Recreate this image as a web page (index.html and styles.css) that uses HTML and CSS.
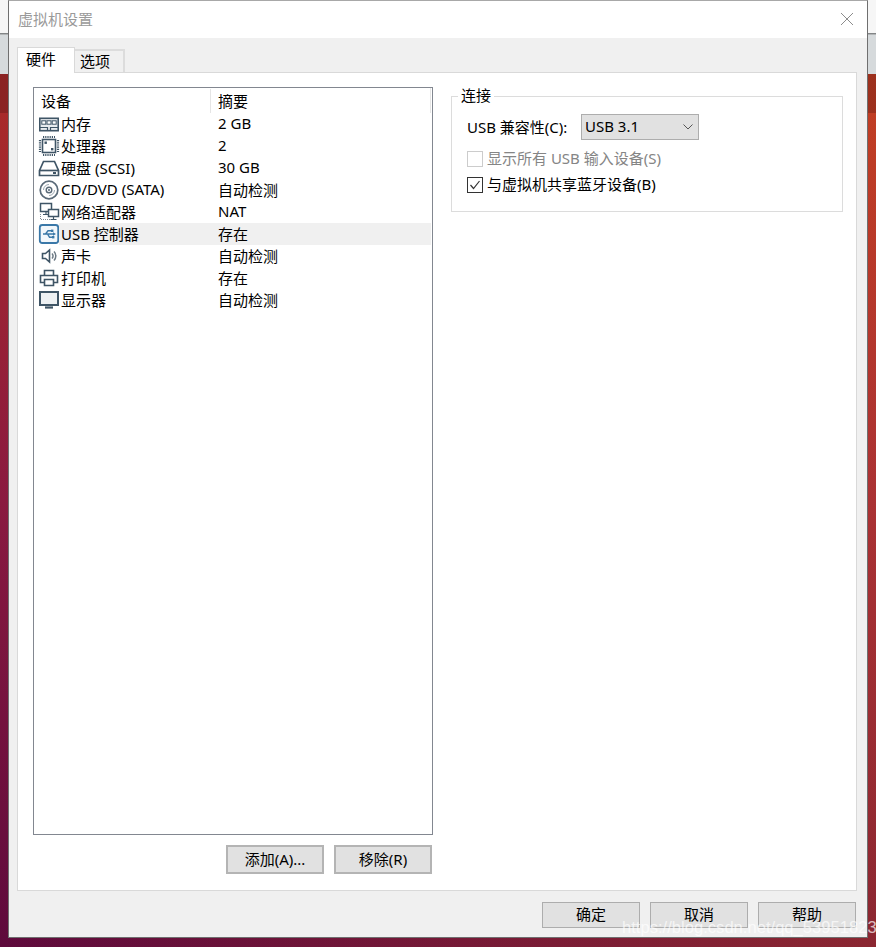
FILE: index.html
```html
<!DOCTYPE html>
<html lang="zh-CN">
  <head>
    <meta charset="UTF-8" />
    <title>虚拟机设置</title>
    <link rel="stylesheet" href="styles.css">
  </head>
  <body>
    <div class="window">
      <div class="titlebar">
        <span class="window-title">虚拟机设置</span>
        <svg class="close-icon" width="14" height="14" viewBox="0 0 14 14">
          <path d="M1 1L13 13M13 1L1 13" />
        </svg>
      </div>
      <div class="content">
        <div class="tabs">
          <div class="tab active"><span class="tab-text">硬件</span></div>
          <div class="tab"><span class="tab-text">选项</span></div>
        </div>
        <div class="panel">
          <div class="left-col">
            <div class="device-list">
              <div class="list-head">
                <div class="head-name">设备</div>
                <div class="head-summary">摘要</div>
              </div>

              <div class="device-row">
                <svg class="device-icon" width="22" height="22" viewBox="0 0 22 22">
                  <rect x="1.8" y="5.3" width="18.4" height="12.4" fill="#e8ecef" stroke-width="1.6" />
                  <rect class="light" x="3.8" y="7.8" width="4" height="3.4" />
                  <rect class="light" x="9" y="7.8" width="4" height="3.4" />
                  <rect class="light" x="14.2" y="7.8" width="4" height="3.4" />
                  <path stroke-width="1.2" d="M2 14.5H9.5V17.5M12.5 17.5V14.5H20" />
                </svg>
                <div class="device-body">
                  <div class="device-name">内存</div>
                  <div class="device-summary">2 GB</div>
                </div>
              </div>

              <div class="device-row">
                <svg class="device-icon" width="22" height="22" viewBox="0 0 22 22">
                  <rect x="4.5" y="4.5" width="13" height="13" fill="#fff" stroke-width="1.6" />
                  <rect class="solid" x="6.5" y="6.5" width="2.4" height="2.4" />
                  <rect class="solid" x="13" y="13" width="2.4" height="2.4" />
                  <path stroke-dasharray="1.2 1" stroke-width="2.2" d="M5 2H17M5 20H17M2 5V17M20 5V17" />
                </svg>
                <div class="device-body">
                  <div class="device-name">处理器</div>
                  <div class="device-summary">2</div>
                </div>
              </div>

              <div class="device-row">
                <svg class="device-icon" width="22" height="22" viewBox="0 0 22 22">
                  <path stroke-width="1.7" d="M1.5 13.5L5.5 4.5H16.5L20.5 13.5V18.5H1.5Z" fill="#fff" />
                  <path stroke-width="1.7" d="M1.5 13.5H20.5" />
                  <rect class="solid" x="15" y="15" width="3" height="2" />
                </svg>
                <div class="device-body">
                  <div class="device-name">硬盘 (SCSI)</div>
                  <div class="device-summary">30 GB</div>
                </div>
              </div>

              <div class="device-row">
                <svg class="device-icon" width="22" height="22" viewBox="0 0 22 22">
                  <circle cx="11" cy="11" r="8.8" stroke="#5a6a78" stroke-width="1.7" fill="#fff" />
                  <circle cx="11" cy="11" r="2.8" stroke="#5a6a78" stroke-width="1.4" />
                  <circle class="solid" cx="11" cy="11" r="0.9" />
                  <path stroke="#9aa6b0" d="M5.5 11A5.5 5.5 0 0 1 11 5.5M16.5 11A5.5 5.5 0 0 1 11 16.5" />
                </svg>
                <div class="device-body">
                  <div class="device-name">CD/DVD (SATA)</div>
                  <div class="device-summary">自动检测</div>
                </div>
              </div>

              <div class="device-row">
                <svg class="device-icon" width="22" height="22" viewBox="0 0 22 22">
                  <path stroke-dasharray="1 1" stroke="#7f8a93" d="M2.5 13V18.5H13" />
                  <rect x="2.5" y="2.5" width="11" height="8" fill="#fff" stroke-width="1.5" />
                  <path stroke-width="1.2" d="M8 10.5V13M5 13.5H10" />
                  <rect x="10.5" y="8.5" width="10" height="7" fill="#fff" stroke-width="1.5" />
                  <path stroke-width="1.2" d="M15.5 15.5V18M12.5 18.5H18.5" />
                </svg>
                <div class="device-body">
                  <div class="device-name">网络适配器</div>
                  <div class="device-summary">NAT</div>
                </div>
              </div>

              <div class="device-row selected">
                <svg class="device-icon usb" width="22" height="22" viewBox="0 0 22 22">
                  <rect x="1.8" y="2" width="18.4" height="18" rx="2.5" fill="#f2f7fb" stroke-width="1.8" />
                  <path stroke-width="1.4" d="M5 11H16M7.5 11L10 7.8H13M9.5 11L11.5 14.2H14" />
                  <path class="arrow" d="M18 11L15 9.2V12.8Z" />
                  <rect class="arrow" x="13" y="6.6" width="2.4" height="2.4" />
                  <rect class="arrow" x="14" y="13" width="2.4" height="2.4" />
                </svg>
                <div class="device-body">
                  <div class="device-name">USB 控制器</div>
                  <div class="device-summary">存在</div>
                </div>
              </div>

              <div class="device-row">
                <svg class="device-icon" width="22" height="22" viewBox="0 0 22 22">
                  <path stroke-width="1.6" d="M4.5 8.5H7.5L11.5 5V17L7.5 13.5H4.5Z" fill="#fff" />
                  <path stroke="#6d7a85" stroke-width="1.5" d="M14 8.5A3.5 3.5 0 0 1 14 13.5M16 6.5A6.5 6.5 0 0 1 16 15.5" />
                </svg>
                <div class="device-body">
                  <div class="device-name">声卡</div>
                  <div class="device-summary">自动检测</div>
                </div>
              </div>

              <div class="device-row">
                <svg class="device-icon" width="22" height="22" viewBox="0 0 22 22">
                  <path stroke-width="1.6" d="M6.5 8V3.5H15.5V8" />
                  <path stroke-width="1.6" d="M6 15.5H2.5V8.5H19.5V15.5H16" fill="#fff" />
                  <path stroke-width="1.6" d="M6.5 12.5H15.5V18.5H6.5Z" fill="#fff" />
                </svg>
                <div class="device-body">
                  <div class="device-name">打印机</div>
                  <div class="device-summary">存在</div>
                </div>
              </div>

              <div class="device-row">
                <svg class="device-icon" width="22" height="22" viewBox="0 0 22 22">
                  <rect x="2" y="3" width="18" height="13" stroke-width="2" fill="#eef1f3" />
                  <path stroke-width="2.2" d="M7 18.5H15" />
                </svg>
                <div class="device-body">
                  <div class="device-name">显示器</div>
                  <div class="device-summary">自动检测</div>
                </div>
              </div>
            </div>
            <div class="list-actions">
              <button class="btn focus">添加(A)...</button>
              <button class="btn focus">移除(R)</button>
            </div>
          </div>

          <div class="right-col">
            <div class="group">
              <div class="group-title">连接</div>
              <div class="field">
                <span class="field-label">USB 兼容性(C):</span>
                <div class="select">
                  <span class="select-value">USB 3.1</span>
                  <svg width="10" height="6" viewBox="0 0 10 6">
                    <path d="M0.5 0.5L5 5L9.5 0.5" />
                  </svg>
                </div>
              </div>
              <div class="check-row disabled">
                <span class="check"></span>
                <span class="check-text">显示所有 USB 输入设备(S)</span>
              </div>
              <div class="check-row">
                <span class="check">
                  <svg width="14" height="14" viewBox="0 0 14 14">
                    <path d="M2.5 7L5.5 10.5L11.5 3" />
                  </svg>
                </span>
                <span class="check-text">与虚拟机共享蓝牙设备(B)</span>
              </div>
            </div>
          </div>
        </div>
        <div class="footer">
          <button class="btn">确定</button>
          <button class="btn">取消</button>
          <button class="btn">帮助</button>
        </div>
      </div>
    </div>
    <div class="watermark">https://blog.csdn.net/qq_53951823</div>
  </body>
</html>
```

FILE: styles.css
```css
* {
  box-sizing: border-box;
}
html,
body {
  height: 100%;
}
body {
  margin: 0;
  overflow: hidden;
  position: relative;
  font-family: "Noto Sans", "Noto Sans CJK SC", sans-serif;
  font-size: 15px;
  color: #000;
  background:
    linear-gradient(
      to bottom,
      #f6f6f6 0,
      #f6f6f6 33px,
      #77797a 33px,
      #8d9091 34px,
      #d6dadc 35px,
      #d6dadc 74px,
      rgba(50, 10, 10, 0.25) 74px,
      rgba(50, 10, 10, 0.25) 113px,
      transparent 113px
    ),
    linear-gradient(to right, transparent, rgba(255, 112, 20, 0.28)),
    linear-gradient(to bottom, #a82a2a 0, #a82a2a 113px, #8a1a40 500px, #5e0a3c 100%);
}
.window {
  width: 860px;
  height: 938px;
  margin-left: 8px;
  border: 1px solid #6f6f6f;
  border-top-color: #a8a8a8;
  background: #f0f0f0;
  display: flex;
  flex-direction: column;
}
.titlebar {
  height: 37px;
  flex: none;
  background: #fff;
  display: flex;
  align-items: center;
  justify-content: space-between;
  padding: 0 13px 2px 9px;
}
.window-title {
  color: #9a9a9a;
}
.close-icon path {
  fill: none;
  stroke: #8c8c8c;
  stroke-width: 1;
}
.content {
  flex: 1;
  padding: 9px 10px 9px 8px;
  display: flex;
  flex-direction: column;
}
.tabs {
  display: flex;
  align-items: flex-end;
  height: 26px;
  flex: none;
  position: relative;
  z-index: 1;
}
.tab {
  width: 50px;
  height: 23px;
  margin-bottom: 1px;
  background: #f0f0f0;
  border: 2px solid #dcdcdc;
  border-left: none;
  border-bottom: none;
  display: flex;
  align-items: center;
  padding: 0 0 2px 5px;
}
.tab.active {
  width: 58px;
  height: 26px;
  margin-bottom: 0;
  background: #fff;
  border: 1px solid #d9d9d9;
  border-bottom: none;
  padding: 0 0 5px 8px;
}
.panel {
  height: 819px;
  margin-top: -1px;
  flex: none;
  background: #fff;
  border: 1px solid #d9d9d9;
  padding: 14px 0 0 15px;
  display: flex;
}
.left-col {
  width: 400px;
  flex: none;
}
.device-list {
  height: 748px;
  border: 1px solid #828790;
  background: #fff;
}
.list-head {
  height: 25px;
  display: flex;
  align-items: center;
  margin-right: 1px;
  border-right: 1px solid #e5e5e5;
}
.head-name {
  width: 177px;
  height: 24px;
  line-height: 24px;
  padding-left: 7px;
  border-right: 1px solid #e5e5e5;
}
.head-summary {
  padding: 0 0 0 7px;
}
.device-row {
  height: 22px;
  display: flex;
  align-items: center;
  padding-left: 4px;
}
.device-icon {
  flex: none;
  margin-right: -1px;
  fill: none;
  stroke: #3f5566;
}
.device-icon .solid {
  fill: #3f5566;
  stroke: none;
}
.device-icon .light {
  fill: #fff;
  stroke-width: 1;
}
.device-icon.usb {
  stroke: #3a78a8;
}
.device-icon.usb .arrow {
  fill: #3a78a8;
  stroke: none;
}
.device-body {
  flex: 1;
  height: 22px;
  margin-right: 1px;
  display: flex;
  align-items: center;
  padding: 0 0 2px 2px;
}
.selected .device-body {
  background: #f0f0f0;
}
.device-name {
  width: 157px;
  flex: none;
}
.list-actions {
  display: flex;
  justify-content: flex-end;
  gap: 10px;
  margin-top: 10px;
  padding-right: 1px;
}
.btn {
  width: 98px;
  height: 26px;
  padding: 0 0 2px;
  font: inherit;
  line-height: 16px;
  color: #000;
  background: #e1e1e1;
  border: 1px solid #adadad;
  border-radius: 0;
}
.btn.focus {
  height: 29px;
  border: 2px solid #b4b4b4;
}
.right-col {
  flex: 1;
  padding: 9px 13px 0 18px;
}
.group {
  height: 116px;
  position: relative;
  border: 1px solid #dcdcdc;
  padding: 17px 0 0 15px;
}
.group-title {
  position: absolute;
  left: 6px;
  top: -12px;
  height: 20px;
  line-height: 20px;
  padding: 0 3px;
  background: #fff;
}
.field {
  display: flex;
  align-items: center;
  height: 26px;
}
.field-label {
  width: 114px;
  flex: none;
  padding-bottom: 2px;
}
.select {
  width: 118px;
  height: 26px;
  background: #e1e1e1;
  border: 1px solid #adadad;
  display: flex;
  align-items: center;
  justify-content: space-between;
  padding: 0 5px 0 3px;
}
.select-value {
  padding-bottom: 2px;
}
.select path {
  fill: none;
  stroke: #555;
}
.check-row {
  display: flex;
  align-items: center;
  gap: 4px;
  height: 16px;
  margin-top: 11px;
}
.check-row + .check-row {
  margin-top: 10px;
}
.check-text {
  padding-bottom: 3px;
}
.check {
  width: 16px;
  height: 16px;
  flex: none;
  border: 1px solid #333;
  background: #fff;
  display: flex;
}
.check path {
  fill: none;
  stroke: #333;
  stroke-width: 1.2;
}
.check-row.disabled {
  color: #858585;
}
.check-row.disabled .check {
  border-color: #ccc;
}
.footer {
  display: flex;
  justify-content: flex-end;
  gap: 10px;
  margin-top: 11px;
  padding-right: 1px;
}
.watermark {
  position: absolute;
  left: 622px;
  top: 921px;
  font-family: "Liberation Sans", sans-serif;
  font-size: 16.6px;
  line-height: 14px;
  color: rgba(255, 255, 255, 0.7);
  white-space: nowrap;
}
```
